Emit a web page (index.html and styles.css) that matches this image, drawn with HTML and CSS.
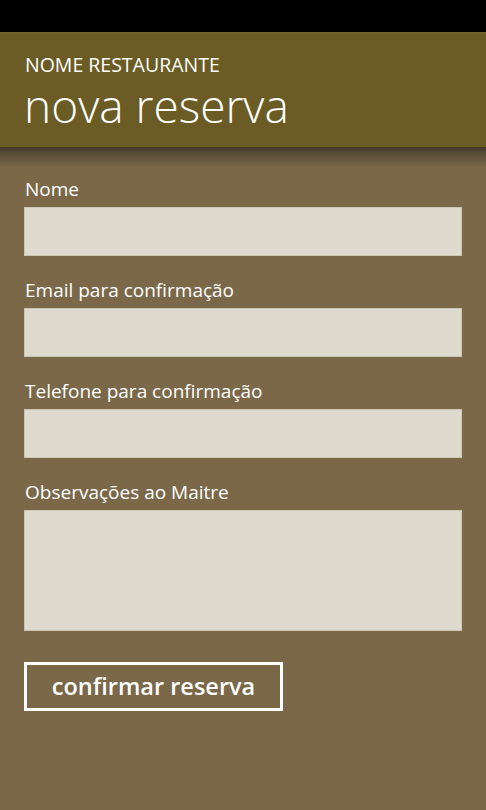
FILE: index.html
```html
<!DOCTYPE html>
<html lang="pt">
<head>
  <meta charset="UTF-8" />
  <title>Nova reserva</title>
  <link rel="stylesheet" href="styles.css">
</head>
<body>

<div class="phone">
  <div class="status-bar"></div>

  <div class="header">
    <div class="app-title">NOME RESTAURANTE</div>
    <h1 class="page-title">nova reserva</h1>
  </div>

  <form class="form" onsubmit="return false;">
    <div class="field">
      <label for="nome">Nome</label>
      <input type="text" id="nome" />
    </div>
    <div class="field">
      <label for="email">Email para confirmação</label>
      <input type="email" id="email" />
    </div>
    <div class="field">
      <label for="telefone">Telefone para confirmação</label>
      <input type="text" id="telefone" />
    </div>
    <div class="field">
      <label for="obs">Observações ao Maitre</label>
      <textarea id="obs"></textarea>
    </div>
    <button class="confirm-btn" type="submit">confirmar reserva</button>
  </form>
</div>

</body>
</html>
```

FILE: styles.css
```css
body {
  margin: 0;
  padding: 0;
  font-family: "Open Sans", "Noto Sans", sans-serif;
  background: #7a6849;
  color: #fff;
}

.phone {
  width: 486px;
  height: 810px;
  display: flex;
  flex-direction: column;
  overflow: hidden;
}

.status-bar {
  height: 32px;
  background: #000;
  flex-shrink: 0;
}

.header {
  height: 115px;
  box-sizing: border-box;
  background: #6a5c24;
  border-top: 2px solid #6f6129;
  padding: 19px 0 0 24px;
  flex-shrink: 0;
}

.app-title {
  font-size: 19.5px;
  line-height: 24px;
  margin-left: 1px;
}

.page-title {
  margin: 0;
  font-size: 46px;
  font-weight: 300;
  line-height: 56px;
}

.form {
  flex: 1;
  display: flex;
  flex-direction: column;
  align-items: flex-start;
  gap: 22px;
  padding: 30px 24px 0 24px;
  background: linear-gradient(#3f3727 0, #5e5039 8px, #7a6849 20px);
}

.field {
  display: flex;
  flex-direction: column;
  gap: 6px;
  width: 100%;
}

.field label {
  font-size: 19px;
  line-height: 24px;
  padding-left: 1px;
}

.field input,
.field textarea {
  display: block;
  width: 100%;
  height: 49px;
  box-sizing: border-box;
  margin: 0;
  border: 1px solid #cdc6b2;
  background: #dedace;
  font-family: inherit;
  font-size: 18px;
  outline: none;
  resize: none;
}

.field textarea {
  height: 121px;
}

.confirm-btn {
  margin-top: 9px;
  width: 259px;
  height: 49px;
  box-sizing: border-box;
  border: 3px solid #fff;
  background: transparent;
  color: #fff;
  font-family: inherit;
  font-size: 23.5px;
  font-weight: 600;
  cursor: pointer;
  padding: 0 0 2px 0;
}
```
